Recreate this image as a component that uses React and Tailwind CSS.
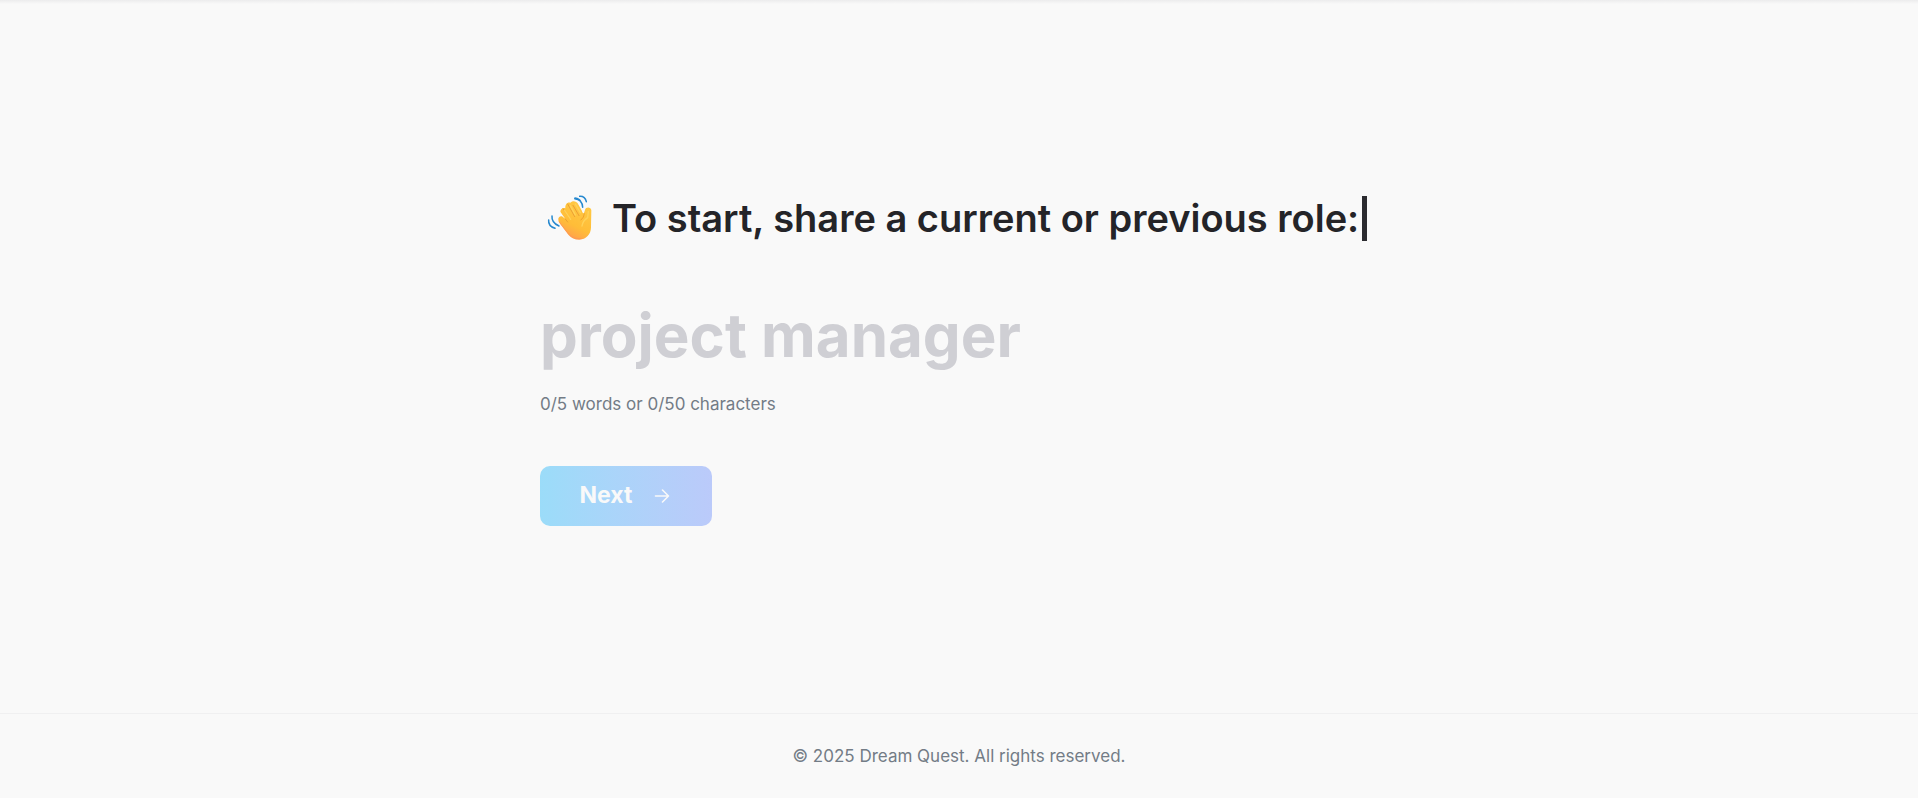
import React, { useState } from "react";

function WavingHand() {
  return (
    <svg viewBox="15 4 216 195" className="h-[65px] w-[72px] shrink-0" aria-hidden="true">
      <defs>
        <linearGradient id="palm" x1="0.75" y1="0.1" x2="0.35" y2="1">
          <stop offset="0" stopColor="#ffc843" />
          <stop offset="0.6" stopColor="#ffbd38" />
          <stop offset="1" stopColor="#ff9d4e" />
        </linearGradient>
      </defs>
      <path
        d="M70 104C69 97 77 92 83 96L91 103L77 83C74 77 82 67 91 71C90 58 98 51 106 54C115 46 124 50 128 56L141 79C142 86 147 88 148 82L150 75C153 66 168 67 169 77L168 128C168 149 153 165 133 165C119 165 109 160 100 150L74 116C71 112 70 108 70 104Z"
        fill="url(#palm)"
      />
      <path d="M84 72L106 103M98 58L119 96M114 62L132 93M91 103L98 112" fill="none" stroke="#eba034" strokeWidth="3" strokeLinecap="round" />
      <path d="M89 78L107 104M106 63L121 91M121 58L136 84M160 80L158 99Q143 109 141 124" fill="none" stroke="#ffd259" strokeWidth="4" strokeLinecap="round" />
      <path d="M148 87Q148 98 138 106" fill="none" stroke="#eda02c" strokeWidth="3" strokeLinecap="round" />
      <path d="M73 112L101 148Q117 164 139 162" fill="none" stroke="#ff9258" strokeWidth="3" strokeLinecap="round" opacity="0.7" />
      <path
        d="M134 35Q150 34 154 51M120 40Q134 41 138 53M119 42Q142 44 143 68M41 106Q39 124 60 131M51 94Q49 114 72 124"
        fill="none"
        stroke="#2789cf"
        strokeWidth="4.5"
        strokeLinecap="round"
      />
    </svg>
  );
}

export default function App() {
  const [role, setRole] = useState("");
  const words = role.trim() ? role.trim().split(/\s+/).length : 0;

  return (
    <div className="flex min-h-screen flex-col bg-[#f9f9f9] font-['Inter',sans-serif] text-[#242428]">
      <div className="h-1 bg-linear-to-b from-[#ececed] to-[#f9f9f9]" />
      <main className="flex flex-1 flex-col justify-center px-6 pb-1.5">
        <form className="mx-auto w-full max-w-[838px]" onSubmit={(e) => e.preventDefault()}>
          <div className="flex items-center">
            <WavingHand />
            <label htmlFor="role" className="flex items-center gap-[3px] text-[38px] leading-[64px] font-semibold whitespace-nowrap">
              <span>To start, share a current or previous role:</span>
              <span className="h-[45px] w-[5px] bg-[#2b2b30]" />
            </label>
          </div>
          <input
            id="role"
            value={role}
            maxLength={50}
            onChange={(e) => setRole(e.target.value)}
            placeholder="project manager"
            className="mt-11 block h-20 w-full bg-transparent text-[60px] font-bold outline-none placeholder:text-[#cfcfd4]"
          />
          <p className="mt-[15px] text-[17px] leading-7 text-[#737c86]">
            {words}/5 words or {role.length}/50 characters
          </p>
          <button
            type="submit"
            disabled={!role}
            className="mt-12 flex h-[60px] w-[172px] items-center justify-center gap-5 rounded-[10px] bg-linear-to-r from-[#9bdcf9] to-[#bbcafa] text-[23px] font-bold text-[#f9f9f9]"
          >
            Next
            <svg viewBox="0 0 20 20" className="size-5" fill="none" stroke="currentColor" strokeWidth="1.6" strokeLinecap="round" strokeLinejoin="round" aria-hidden="true">
              <path d="M3.5 10H16.5M10.5 4L16.5 10L10.5 16" />
            </svg>
          </button>
        </form>
      </main>
      <footer className="border-t border-[#f0f0f1] py-7 text-center text-[17px] leading-7 text-[#737c86]">
        © 2025 Dream Quest. All rights reserved.
      </footer>
    </div>
  );
}
